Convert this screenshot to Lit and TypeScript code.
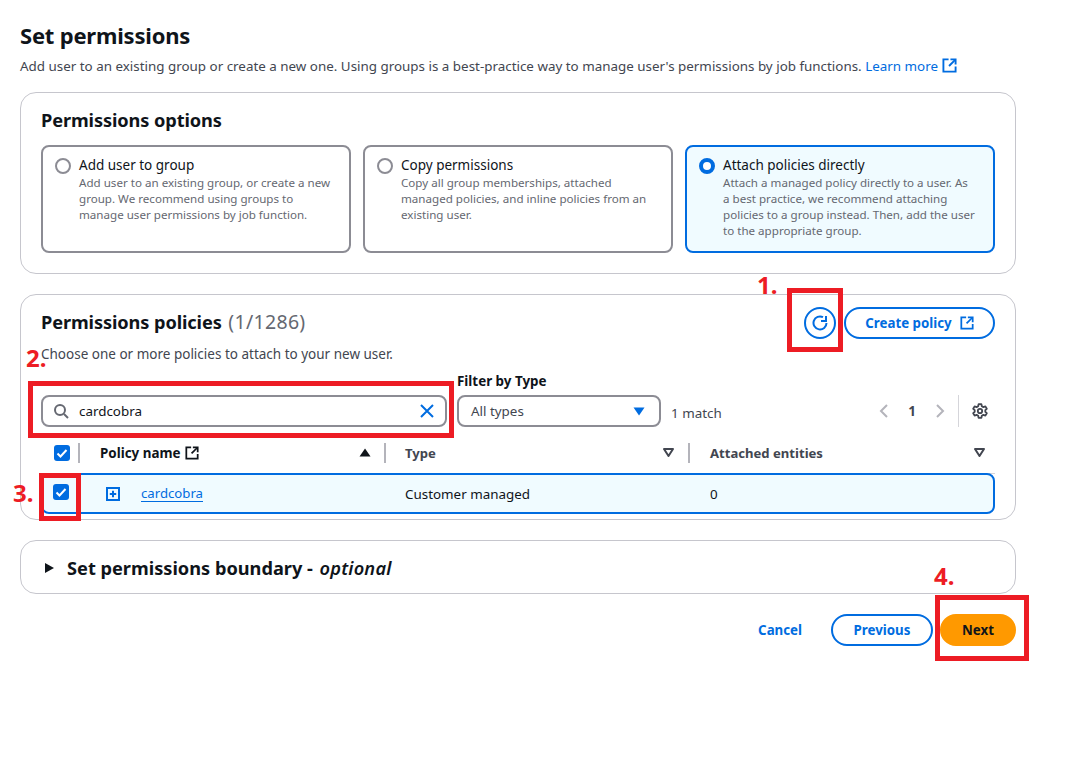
import { LitElement, html, css } from "lit";
import { customElement } from "lit/decorators.js";

const ext = (c: string, s = 14) => html`<svg width=${s} height=${s} viewBox="0 0 16 16" fill="none" stroke=${c} stroke-width="2"><path d="M7 1.5H1.5v13h13V9"/><path d="M9 1.5h5.5V7"/><path d="M14 2 7.5 8.5"/></svg>`;
const check = html`<svg width="16" height="16" viewBox="0 0 16 16"><rect width="16" height="16" rx="3" fill="#006ce0"/><path d="M3.5 8.5 6.5 11.5 12.5 5" fill="none" stroke="#fff" stroke-width="2"/></svg>`;
const sortDown = html`<svg width="11" height="9" viewBox="0 0 11 9"><path d="M1 1h9L5.5 8z" fill="none" stroke="#424650" stroke-width="2" stroke-linejoin="round"/></svg>`;

@customElement("app-root")
export class AppRoot extends LitElement {
  static styles = css`
    :host { display: block; position: relative; width: 1067px; height: 772px; background: #fff; overflow: hidden; font-family: "Noto Sans", "Open Sans", sans-serif; color: #0f141a; font-size: 13.4px; }
    .page { padding: 20px 51px 0 20px; display: flex; flex-direction: column; }
    h1 { margin: 0; font-size: 22px; line-height: 30px; font-weight: 700; letter-spacing: -0.2px; }
    .sub { margin: 7px 0 0; font-size: 13.4px; line-height: 18px; color: #424650; white-space: nowrap; height: 18px; }
    a { color: #006ce0; text-decoration: none; }
    .sub svg { vertical-align: -2px; margin-left: 1px; }
    .card { border: 1px solid #c6c6cd; border-radius: 16px; background: #fff; box-sizing: border-box; }
    .c1 { margin-top: 17px; height: 182px; padding: 14px 20px 0; }
    h2 { margin: 0; font-size: 18.2px; line-height: 26px; font-weight: 700; letter-spacing: -0.1px; }
    .opts { display: grid; grid-template-columns: repeat(3, 310px); gap: 12px; margin-top: 12px; }
    .opt { box-sizing: border-box; height: 108px; border: 2px solid #8c8c94; border-radius: 8px; padding: 9px 12px; display: flex; gap: 8px; }
    .opt.on { border-color: #006ce0; background: #f0fbff; }
    .radio { width: 16px; height: 16px; flex: none; box-sizing: border-box; border: 2px solid #8c8c94; border-radius: 50%; margin-top: 2px; background: #fff; }
    .on .radio { border: 4.5px solid #006ce0; }
    .ot { font-size: 13.5px; line-height: 19px; }
    .od { font-size: 11.6px; line-height: 16px; color: #656871; max-width: 254px; }
    .c2 { margin-top: 20px; height: 226px; padding: 0 20px; }
    .hd { display: flex; align-items: flex-start; padding-top: 12px; height: 42px; box-sizing: border-box; }
    .hd h2 { flex: 1; margin-top: 2px; white-space: nowrap; }
    .hd h2 span { font-weight: 400; color: #656871; font-size: 19.5px; letter-spacing: 0.3px; margin-left: 2px; }
    .refresh { width: 32px; height: 32px; box-sizing: border-box; border: 2px solid #006ce0; border-radius: 50%; display: flex; align-items: center; justify-content: center; }
    .btn { box-sizing: border-box; border-radius: 20px; height: 32px; border: 2px solid #006ce0; color: #006ce0; font-weight: 700; font-size: 13.3px; display: flex; align-items: center; justify-content: center; gap: 8px; }
    .create { width: 151px; margin-left: 8px; }
    .choose { font-size: 13.5px; line-height: 18px; color: #424650; margin-top: 8px; height: 18px; }
    .filters { display: flex; align-items: flex-end; margin-top: 1px; height: 63px; }
    .search { box-sizing: border-box; width: 406px; height: 32px; border: 2px solid #8c8c94; border-radius: 8px; display: flex; align-items: center; padding: 0 10px 0 10px; gap: 10px; font-size: 13.4px; }
    .search span { flex: 1; color: #0f141a; }
    .fbt { margin-left: 10px; display: flex; flex-direction: column; }
    .fbt b { font-size: 13.4px; line-height: 18px; margin-bottom: 5px; }
    .sel { box-sizing: border-box; width: 204px; height: 32px; border: 2px solid #8c8c94; border-radius: 8px; display: flex; align-items: center; justify-content: space-between; padding: 0 14px 0 12px; font-size: 13.4px; color: #424650; }
    .match { margin-left: 10px; font-size: 13.4px; color: #424650; line-height: 32px; margin-bottom: -2px; flex: 1; }
    .pager { display: flex; align-items: center; height: 32px; font-size: 13.4px; font-weight: 700; color: #424650; margin-right: 7px; }
    .pager svg.g { display: block; }
    .pager .n { margin: 0 18px 0 18px; }
    .vsep { width: 1px; height: 32px; background: #d5d5da; margin: 0 13px 0 12px; }
    .thead { display: flex; align-items: center; height: 46px; padding-top: 4px; border-bottom: 1px solid #d5d5da; box-sizing: border-box; margin-top: 1px; font-size: 13.1px; font-weight: 700; color: #424650; }
    .cell { display: flex; align-items: center; box-sizing: border-box; height: 100%; }
    .tsep { width: 2px; height: 20px; background: #b4b4bb; flex: none; }
    .w1 { width: 39px; padding-left: 13px; justify-content: space-between; }
    .w2 { width: 304px; padding-left: 20px; justify-content: space-between; padding-right: 13px; color: #0f141a; font-size: 13.4px; }
    .w3 { width: 302px; padding-left: 19px; justify-content: space-between; padding-right: 14px; }
    .w4 { flex: 1; padding-left: 20px; justify-content: space-between; padding-right: 10px; }
    .pn { display: flex; align-items: center; gap: 4px; }
    .row { display: flex; align-items: center; box-sizing: border-box; height: 41px; border: 2px solid #006ce0; border-radius: 0 8px 8px 8px; background: #f0fbff; font-size: 13.4px; color: #0f141a; margin-top: -1px; }
    .r1 { box-sizing: border-box; flex: none; width: 36px; padding-left: 10px; }
    .r2 { width: 326px; display: flex; align-items: center; padding-left: 26.5px; gap: 21.5px; box-sizing: border-box; flex: none; }
    .r2 a { border-bottom: 1px solid #006ce0; line-height: 16px; font-size: 13.2px; }
    .r3 { width: 305px; flex: none; }
    .c3 { margin-top: 20px; height: 54px; padding-top: 2px; display: flex; align-items: center; padding-left: 23px; gap: 12px; font-size: 18.2px; font-weight: 700; }
    .c3 i { font-weight: 600; font-style: italic; margin-left: 2px; letter-spacing: 0.2px; }
    .foot { display: flex; justify-content: flex-end; align-items: center; margin-top: 20px; }
    .cancel { color: #006ce0; font-weight: 700; font-size: 13.3px; margin-right: 29px; }
    .prev { width: 102px; }
    .next { width: 76px; margin-left: 7px; background: #ff9900; border-color: #ff9900; color: #0f141a; }
    .mark { position: absolute; box-sizing: border-box; border: 5px solid #ed1c24; pointer-events: none; }
    .num { position: absolute; color: #ed1c24; font-weight: 700; font-size: 24px; line-height: 28px; font-family: "Noto Sans", sans-serif; }
  `;

  private opt(t: string, d: string, on = false) {
    return html`<div class="opt ${on ? "on" : ""}"><div class="radio"></div><div><div class="ot">${t}</div><div class="od">${d}</div></div></div>`;
  }

  render() {
    return html`
      <div class="page">
        <h1>Set permissions</h1>
        <p class="sub">Add user to an existing group or create a new one. Using groups is a best-practice way to manage user's permissions by job functions. <a href="#">Learn more ${ext("#006ce0", 15)}</a></p>
        <section class="card c1">
          <h2>Permissions options</h2>
          <div class="opts">
            ${this.opt("Add user to group", "Add user to an existing group, or create a new group. We recommend using groups to manage user permissions by job function.")}
            ${this.opt("Copy permissions", "Copy all group memberships, attached managed policies, and inline policies from an existing user.")}
            ${this.opt("Attach policies directly", "Attach a managed policy directly to a user. As a best practice, we recommend attaching policies to a group instead. Then, add the user to the appropriate group.", true)}
          </div>
        </section>
        <section class="card c2">
          <div class="hd">
            <h2>Permissions policies <span>(1/1286)</span></h2>
            <div class="refresh"><svg width="16" height="16" viewBox="0 0 16 16" fill="none" stroke="#006ce0" stroke-width="2"><path d="M14.5 8A6.5 6.5 0 1 1 11 2.2"/><path d="M14 1v5H9"/></svg></div>
            <div class="btn create">Create policy ${ext("#006ce0")}</div>
          </div>
          <div class="choose">Choose one or more policies to attach to your new user.</div>
          <div class="filters">
            <div class="search">
              <svg width="16" height="16" viewBox="0 0 16 16" fill="none" stroke="#656871" stroke-width="2"><circle cx="7" cy="7" r="5"/><path d="m11 11 4 4"/></svg>
              <span>cardcobra</span>
              <svg width="16" height="16" viewBox="0 0 16 16" fill="none" stroke="#006ce0" stroke-width="2"><path d="m2 2 12 12M14 2 2 14"/></svg>
            </div>
            <div class="fbt"><b>Filter by Type</b><div class="sel">All types<svg width="12" height="9" viewBox="0 0 12 9"><path d="M0.5 0.5h11L6 8.5z" fill="#006ce0"/></svg></div></div>
            <div class="match">1 match</div>
            <div class="pager">
              <svg class="g" width="12" height="16" viewBox="0 0 12 16" fill="none" stroke="#b4b4bb" stroke-width="2"><path d="M9 2 3 8l6 6"/></svg>
              <span class="n">1</span>
              <svg class="g" width="12" height="16" viewBox="0 0 12 16" fill="none" stroke="#b4b4bb" stroke-width="2"><path d="m3 2 6 6-6 6"/></svg>
              <div class="vsep"></div>
              <svg class="g" width="16" height="16" viewBox="0 0 16 16" fill="none" stroke="#424650" stroke-width="1.8"><circle cx="8" cy="8" r="2.2"/><path d="M6.6 1.2h2.8l.4 2 1.6.9 2-.7 1.4 2.4-1.5 1.4v1.6l1.5 1.4-1.4 2.4-2-.7-1.6.9-.4 2H6.6l-.4-2-1.6-.9-2 .7-1.4-2.4 1.5-1.4V7.2L1.2 5.8l1.4-2.4 2 .7 1.6-.9z" stroke-linejoin="round"/></svg>
            </div>
          </div>
          <div class="thead">
            <div class="cell w1">${check}<div class="tsep"></div></div>
            <div class="cell w2"><span class="pn">Policy name ${ext("#0f141a")}</span><svg width="12" height="9" viewBox="0 0 12 9"><path d="M6 0.5 11.5 8.5H.5z" fill="#0f141a"/></svg></div>
            <div class="tsep"></div>
            <div class="cell w3">Type ${sortDown}</div>
            <div class="tsep"></div>
            <div class="cell w4">Attached entities ${sortDown}</div>
          </div>
          <div class="row">
            <div class="r1">${check}</div>
            <div class="r2"><svg width="14" height="14" viewBox="0 0 14 14" fill="none" stroke="#006ce0" stroke-width="2"><rect x="1" y="1" width="12" height="12"/><path d="M7 3.8v6.4M3.8 7h6.4"/></svg><a href="#">cardcobra</a></div>
            <div class="r3">Customer managed</div>
            <div>0</div>
          </div>
        </section>
        <section class="card c3"><svg width="11" height="12" viewBox="0 0 11 12"><path d="M1 1l9 5-9 5z" fill="#0f141a"/></svg><span>Set permissions boundary - <i>optional</i></span></section>
        <div class="foot">
          <span class="cancel">Cancel</span>
          <div class="btn prev">Previous</div>
          <div class="btn next">Next</div>
        </div>
      </div>
      <div class="mark" style="left:787px;top:288px;width:56px;height:64px"></div>
      <div class="mark" style="left:28px;top:381px;width:426px;height:57px"></div>
      <div class="mark" style="left:39px;top:473px;width:42px;height:48px"></div>
      <div class="mark" style="left:935px;top:595px;width:94px;height:66px"></div>
      <span class="num" style="left:757px;top:271px">1.</span>
      <span class="num" style="left:26px;top:344px">2.</span>
      <span class="num" style="left:13px;top:479px">3.</span>
      <span class="num" style="left:934px;top:562px">4.</span>
    `;
  }
}
